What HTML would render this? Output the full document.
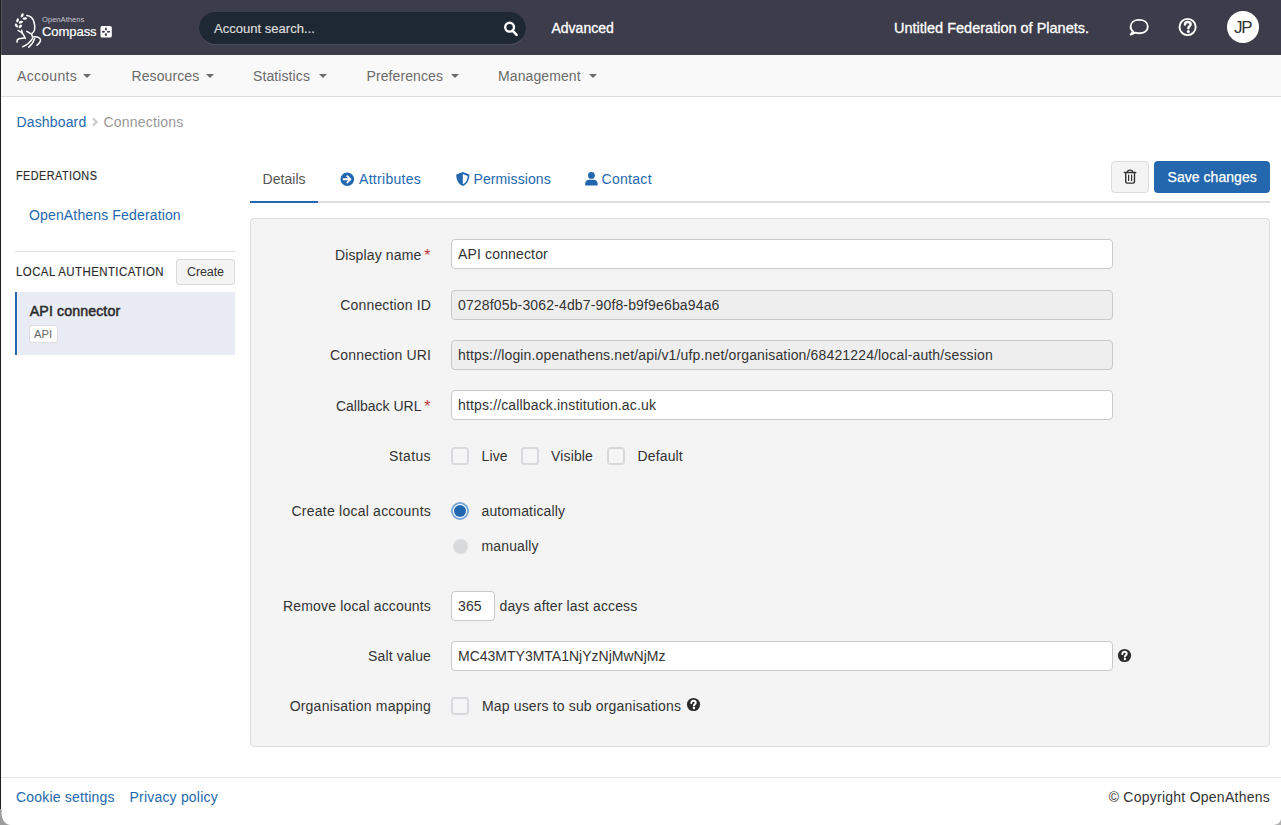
<!DOCTYPE html>
<html><head><meta charset="utf-8">
<style>
html,body{margin:0;padding:0;}
body{width:1281px;height:825px;position:relative;overflow:hidden;background:#fff;font-family:"Liberation Sans",sans-serif;color:#333;}
.a{position:absolute;}
.t{position:absolute;white-space:nowrap;line-height:20px;font-size:14px;}
.r{text-align:right;}
.hdr{left:0;top:0;width:1281px;height:55px;background:#3d3c4b;}
.nav{left:0;top:55px;width:1281px;height:41px;background:#f9f9f9;border-bottom:1px solid #dcdcdc;}
.navt{color:#6b6b6b;top:66px;letter-spacing:0.1px;}
.caret{position:absolute;width:0;height:0;border-left:4px solid transparent;border-right:4px solid transparent;border-top:4px solid #6b6b6b;top:74px;}
.link{color:#2368ae;}
.lbl{color:#333;letter-spacing:0.15px;}
.inp{position:absolute;left:451px;width:660px;height:28px;border:1px solid #c9c9c9;border-radius:4px;background:#fff;}
.dis{background:#eeeeee;}
.cb{position:absolute;width:14px;height:14px;border:2px solid #d8d9dc;border-radius:3.5px;background:#f5f5f5;}
</style></head><body>

<!-- header -->
<div class="a hdr"></div>
<div class="a nav"></div>


<!-- logo -->
<svg class="a" style="left:0;top:0" width="130" height="55" viewBox="0 0 130 55">
 <g fill="none" stroke="#fff" stroke-width="1.5" stroke-linecap="round" stroke-linejoin="round">
  <path d="M26.8,15.6 C30.5,16 33,18.5 34,22 C34.7,24.5 35.2,27 34.6,29.6 C34.2,31.5 33,33 31.4,34 C32,35 32.3,36 32.4,37"/>
  <path d="M26.8,31.4 C28.5,32.5 30,33.3 31.4,34"/>
  <path d="M18.1,30.4 C19.8,31.3 21.2,32 22.2,33 C23.5,34.6 24.5,36.5 25.3,38.5"/>
  <path d="M21.7,30.2 C22,31.2 22.2,32 22.2,33"/>
  <path d="M17.1,42.1 C16.8,40.5 17.5,39.2 19,38.7 C20.8,38.2 22.5,38.3 24.2,38"/>
  <path d="M22.7,46.7 C26.5,45 30.5,42 32.6,38.3"/>
  <path d="M28.8,47.2 C31.5,45 33.5,42 34.6,38.8"/>
  <path d="M33.4,37 C35.5,36.6 38.5,37 40,38.6 C41.3,40.2 40,43 37,45.2"/>
 </g>
 <g fill="#fff">
  <ellipse cx="22.2" cy="15.3" rx="2.2" ry="1.25" transform="rotate(-60 22.2 15.3)"/>
  <ellipse cx="24.8" cy="18.6" rx="2.2" ry="1.25" transform="rotate(-5 24.8 18.6)"/>
  <ellipse cx="17.6" cy="20.3" rx="2.2" ry="1.25" transform="rotate(-75 17.6 20.3)"/>
  <ellipse cx="20.9" cy="22.2" rx="2.2" ry="1.25" transform="rotate(-20 20.9 22.2)"/>
  <ellipse cx="16.4" cy="25.6" rx="2.2" ry="1.25" transform="rotate(55 16.4 25.6)"/>
  <ellipse cx="20.3" cy="26.4" rx="2.2" ry="1.25" transform="rotate(-50 20.3 26.4)"/>
 </g>
 <rect x="100.5" y="26" width="11.3" height="11.5" rx="1.6" fill="#fff"/>
 <g fill="#3d3c4b">
  <ellipse cx="105.9" cy="29" rx="1.05" ry="1.6"/>
  <ellipse cx="105.9" cy="34.5" rx="1.05" ry="1.6"/>
  <ellipse cx="103.4" cy="31.7" rx="1.6" ry="0.95"/>
  <ellipse cx="108.5" cy="31.7" rx="1.6" ry="0.95"/>
 </g>
</svg>
<div class="t" style="left:42px;top:14.5px;font-size:7.6px;line-height:10px;color:#c4c4cc;">OpenAthens</div>
<div class="t" style="left:42px;top:22px;font-size:13px;color:#fff;letter-spacing:-0.05px;-webkit-text-stroke:0.2px #fff;">Compass</div>

<!-- search -->
<div class="a" style="left:199px;top:12px;width:327px;height:32px;border-radius:16px;background:#1e2833;box-shadow:0 0.6px 0 0 #5d5b6d;"></div>
<div class="t" style="left:214px;top:19px;font-size:13px;color:#dcdcdc;letter-spacing:0.03px;-webkit-text-stroke:0.2px #dcdcdc;">Account search...</div>
<svg class="a" style="left:500px;top:19px" width="22" height="20" viewBox="0 0 22 20">
 <circle cx="9.6" cy="8.2" r="4.4" fill="none" stroke="#fff" stroke-width="2.4"/>
 <path d="M12.5,11.6 L16.6,15.8" stroke="#fff" stroke-width="2.6" stroke-linecap="round"/>
</svg>
<div class="t" style="left:551.5px;top:18px;color:#fff;-webkit-text-stroke:0.3px #fff;">Advanced</div>
<div class="t" style="left:894px;top:18px;color:#fff;font-size:14.5px;-webkit-text-stroke:0.3px #fff;">Untitled Federation of Planets.</div>

<!-- chat / help / avatar -->
<svg class="a" style="left:1120px;top:10px" width="90" height="35" viewBox="1120 10 90 35">
 <path d="M1133.2,31.6 C1131.4,30.4 1130.6,28.6 1130.6,26.6 C1130.6,22.4 1134.4,19.9 1139.2,19.9 C1144,19.9 1147.8,22.4 1147.8,26.6 C1147.8,30.8 1144,33.3 1139.2,33.3 C1137.8,33.3 1136.6,33.1 1135.4,32.7 L1130.6,34.6 Z" fill="none" stroke="#fff" stroke-width="1.9" stroke-linejoin="round"/>
 <circle cx="1187.6" cy="27" r="8.1" fill="none" stroke="#fff" stroke-width="1.9"/>
 <path d="M1185,24.4 C1185,22.8 1186.2,21.9 1187.8,21.9 C1189.5,21.9 1190.6,22.9 1190.6,24.3 C1190.6,26.2 1188.4,26.3 1188.4,28.2" fill="none" stroke="#fff" stroke-width="2.5" stroke-linecap="round"/>
 <circle cx="1188.3" cy="31.6" r="1.5" fill="#fff"/>
</svg>
<div class="a" style="left:1226.8px;top:10.5px;width:32.4px;height:32.6px;border-radius:50%;background:#fff;"></div>
<div class="t" style="left:1234px;top:18px;font-size:17px;line-height:20px;color:#333;letter-spacing:-1.2px;">JP</div>


<!-- nav -->
<div class="t navt" style="left:17px;letter-spacing:0.3px;">Accounts</div><div class="caret" style="left:83px;"></div>
<div class="t navt" style="left:131.5px;">Resources</div><div class="caret" style="left:205.5px;"></div>
<div class="t navt" style="left:253px;">Statistics</div><div class="caret" style="left:318.5px;"></div>
<div class="t navt" style="left:366.5px;">Preferences</div><div class="caret" style="left:450.5px;"></div>
<div class="t navt" style="left:498px;">Management</div><div class="caret" style="left:588.5px;"></div>

<!-- breadcrumb -->
<div class="t link" style="left:16.5px;top:112px;letter-spacing:0.15px;">Dashboard</div>
<svg class="a" style="left:90px;top:115px" width="10" height="13" viewBox="0 0 10 13"><path d="M3,3.4 L6.6,7 L3,10.6" fill="none" stroke="#cdcdcd" stroke-width="2.3"/></svg>
<div class="t" style="left:103.5px;top:112px;color:#979797;letter-spacing:0.2px;">Connections</div>

<!-- sidebar -->
<div class="t" style="left:15.7px;top:165.7px;font-size:12.5px;color:#2b2b2b;letter-spacing:0.5px;transform:scaleX(0.87);transform-origin:0 0;-webkit-text-stroke:0.15px #2b2b2b;">FEDERATIONS</div>
<div class="t link" style="left:29px;top:205px;letter-spacing:0.15px;">OpenAthens Federation</div>
<div class="a" style="left:15px;top:251px;width:220px;height:1px;background:#dedede;"></div>
<div class="t" style="left:15.5px;top:261.5px;font-size:12.5px;color:#2b2b2b;letter-spacing:0.5px;transform:scaleX(0.913);transform-origin:0 0;-webkit-text-stroke:0.15px #2b2b2b;">LOCAL AUTHENTICATION</div>
<div class="a" style="left:176px;top:259px;width:57px;height:24px;border:1px solid #dadada;border-radius:3px;background:#f4f4f4;"></div>
<div class="t" style="left:187px;top:261.5px;font-size:12.5px;color:#333;letter-spacing:-0.1px;">Create</div>
<div class="a" style="left:15px;top:292px;width:218px;height:63px;border-left:2px solid #2368ae;background:#e9ecf5;box-shadow:inset 1px 0 0 #f2f4fa;"></div>
<div class="t" style="left:29.8px;top:301px;font-size:14.2px;color:#2b2b2b;letter-spacing:0.1px;-webkit-text-stroke:0.5px #2b2b2b;">API connector</div>
<div class="a" style="left:29px;top:325px;width:26.5px;height:15.5px;border:1px solid #dcdcdc;border-radius:3px;background:#fff;"></div>
<div class="t" style="left:34px;top:326.5px;font-size:11.2px;line-height:14px;color:#666;">API</div>


<!-- tabs -->
<div class="t" style="left:262.5px;top:169px;color:#555;letter-spacing:0.05px;">Details</div>
<div class="a" style="left:250px;top:201px;width:1020px;height:2px;background:#dedede;"></div>
<div class="a" style="left:250px;top:201px;width:68px;height:2px;background:#2368ae;"></div>
<svg class="a" style="left:340px;top:171.7px" width="15" height="15" viewBox="0 0 15 15">
 <circle cx="7.3" cy="7.3" r="6.8" fill="#2368ae"/>
 <path d="M3.6,7.3 L10.2,7.3 M7.3,4.2 L10.4,7.3 L7.3,10.4" fill="none" stroke="#fff" stroke-width="1.9" stroke-linecap="round" stroke-linejoin="round"/>
</svg>
<div class="t link" style="left:359px;top:169px;letter-spacing:0.3px;">Attributes</div>
<svg class="a" style="left:455px;top:171px" width="15" height="16" viewBox="0 0 15 16">
 <path d="M7.8,0.9 L14.3,3.5 C14.5,9 12.2,13 7.8,15.1 C3.4,13 1.1,9 1.3,3.5 Z" fill="#2368ae"/>
 <path d="M7.8,2.9 L12.6,4.9 C12.6,8.8 11,11.8 7.8,13.3 Z" fill="#fff"/>
</svg>
<div class="t link" style="left:473.5px;top:169px;letter-spacing:0.1px;">Permissions</div>
<svg class="a" style="left:584px;top:171px" width="15" height="16" viewBox="0 0 15 16">
 <circle cx="7.4" cy="4.4" r="3.4" fill="#2368ae"/>
 <path d="M1.2,14.6 L1.2,12.6 C1.2,10.2 3,8.8 5,8.8 L9.8,8.8 C11.8,8.8 13.6,10.2 13.6,12.6 L13.6,14.6 Z" fill="#2368ae"/>
</svg>
<div class="t link" style="left:601.5px;top:169px;letter-spacing:0.3px;">Contact</div>

<div class="a" style="left:1111px;top:161px;width:36px;height:30px;border:1px solid #dcdcdc;border-radius:4px;background:#f4f4f4;"></div>
<svg class="a" style="left:1115px;top:163px" width="30" height="28" viewBox="0 0 30 28">
 <path d="M9.4,9.5 L20.7,9.5" stroke="#333" stroke-width="1.5" stroke-linecap="round"/>
 <path d="M12.4,9.2 C12.4,7.6 13.1,7.1 15.05,7.1 C17,7.1 17.7,7.6 17.7,9.2" fill="none" stroke="#333" stroke-width="1.3"/>
 <path d="M10.7,10 L10.7,18.6 C10.7,19.6 11.3,20.1 12.3,20.1 L17.9,20.1 C18.9,20.1 19.5,19.6 19.5,18.6 L19.5,10" fill="none" stroke="#333" stroke-width="1.4"/>
 <path d="M13.6,12 L13.6,17.4 M16.6,12 L16.6,17.4" stroke="#333" stroke-width="1.2" stroke-linecap="round"/>
</svg>
<div class="a" style="left:1154px;top:161px;width:116px;height:32px;border-radius:4px;background:#2368ae;"></div>
<div class="t" style="left:1167.5px;top:167px;color:#fff;-webkit-text-stroke:0.25px #fff;letter-spacing:0.05px;">Save changes</div>

<!-- panel -->
<div class="a" style="left:250px;top:218px;width:1018px;height:527px;border:1px solid #dedede;border-radius:4px;background:#f4f4f4;"></div>

<!-- form -->
<div class="t lbl r" style="left:250px;width:171.5px;top:245px;">Display name</div>
<div class="t" style="left:424.3px;top:246px;color:#c0393b;font-size:16px;">*</div>
<div class="inp" style="top:239px;"></div>
<div class="t lbl" style="left:458px;top:244px;">API connector</div>
<div class="t lbl r" style="left:250px;width:181px;top:295px;">Connection ID</div>
<div class="inp dis" style="top:290px;"></div>
<div class="t lbl" style="left:458px;top:295px;">0728f05b-3062-4db7-90f8-b9f9e6ba94a6</div>
<div class="t lbl r" style="left:250px;width:181px;top:345px;">Connection URI</div>
<div class="inp dis" style="top:340px;"></div>
<div class="t lbl" style="left:458px;top:345px;">https://login.openathens.net/api/v1/ufp.net/organisation/68421224/local-auth/session</div>
<div class="t lbl r" style="left:250px;width:171.5px;top:396px;letter-spacing:0;">Callback URL</div>
<div class="t" style="left:424.3px;top:397px;color:#c0393b;font-size:16px;">*</div>
<div class="inp" style="top:390px;"></div>
<div class="t lbl" style="left:458px;top:395px;">https://callback.institution.ac.uk</div>
<div class="t lbl r" style="left:250px;width:181px;top:446px;letter-spacing:0.37px;">Status</div>
<div class="cb" style="left:451px;top:447px;"></div>
<div class="t lbl" style="left:481.5px;top:446px;">Live</div>
<div class="cb" style="left:521px;top:447px;"></div>
<div class="t lbl" style="left:551px;top:446px;">Visible</div>
<div class="cb" style="left:607px;top:447px;"></div>
<div class="t lbl" style="left:637.5px;top:446px;">Default</div>
<div class="t lbl r" style="left:250px;width:181px;top:501px;letter-spacing:0.23px;">Create local accounts</div>
<div class="a" style="left:451px;top:502px;width:14px;height:14px;border-radius:50%;border:2px solid #79a9d9;background:#fff;"></div>
<div class="a" style="left:454px;top:505px;width:12px;height:12px;border-radius:50%;background:#2368ae;"></div>
<div class="t lbl" style="left:481.5px;top:501px;">automatically</div>
<div class="a" style="left:452.5px;top:538.6px;width:15px;height:15px;border-radius:50%;background:#d9dadc;"></div>
<div class="t lbl" style="left:481.5px;top:536px;">manually</div>
<div class="t lbl r" style="left:250px;width:181px;top:596px;">Remove local accounts</div>
<div class="inp" style="top:591px;width:42px;"></div>
<div class="t lbl" style="left:458px;top:596px;">365</div>
<div class="t lbl" style="left:499.5px;top:596px;">days after last access</div>
<div class="t lbl r" style="left:250px;width:181px;top:646px;">Salt value</div>
<div class="inp" style="top:641px;"></div>
<div class="t lbl" style="left:458px;top:646px;letter-spacing:0;">MC43MTY3MTA1NjYzNjMwNjMz</div>
<svg class="a" style="left:1116.5px;top:648px" width="15" height="15" viewBox="0 0 15 15">
 <circle cx="7.5" cy="7.5" r="6.6" fill="#2c2c2c"/>
 <path d="M5.3,5.9 C5.3,4.6 6.2,3.8 7.5,3.8 C8.8,3.8 9.7,4.6 9.7,5.7 C9.7,7.1 7.9,7.2 7.9,8.6" fill="none" stroke="#fff" stroke-width="2" stroke-linecap="round"/>
 <circle cx="7.9" cy="11" r="1.2" fill="#fff"/>
</svg>
<div class="t lbl r" style="left:250px;width:181px;top:696px;letter-spacing:0.22px;">Organisation mapping</div>
<div class="cb" style="left:451px;top:696.5px;"></div>
<div class="t lbl" style="left:482px;top:696px;">Map users to sub organisations</div>
<svg class="a" style="left:686px;top:697px" width="15" height="15" viewBox="0 0 15 15">
 <circle cx="7.5" cy="7.5" r="6.6" fill="#2c2c2c"/>
 <path d="M5.3,5.9 C5.3,4.6 6.2,3.8 7.5,3.8 C8.8,3.8 9.7,4.6 9.7,5.7 C9.7,7.1 7.9,7.2 7.9,8.6" fill="none" stroke="#fff" stroke-width="2" stroke-linecap="round"/>
 <circle cx="7.9" cy="11" r="1.2" fill="#fff"/>
</svg>

<!-- footer -->
<div class="a" style="left:0;top:777px;width:1281px;height:1px;background:#e6e6e6;"></div>
<div class="t link" style="left:16px;top:787px;letter-spacing:0.2px;">Cookie settings</div>
<div class="t link" style="left:129.5px;top:787px;letter-spacing:0.2px;">Privacy policy</div>
<div class="t r" style="left:1000px;width:1270px;left:0;top:787px;color:#333;letter-spacing:0.25px;">&copy; Copyright OpenAthens</div>

<!-- left window border -->
<div class="a" style="left:0;top:0;width:1px;height:809px;background:#1e1e1e;"></div>
<svg class="a" style="left:0;top:800px" width="1281" height="25" viewBox="0 800 1281 25">
 <path d="M0,809 L1.6,809 L1.6,813 C1.8,820 5,824.5 11,825 L0,825 Z" fill="#9c9c9c"/>
 <path d="M1281,819 C1280,823.5 1277,825 1271,825 L1281,825 Z" fill="#b0b0b0"/>
</svg>
<div class="a" style="left:1px;top:0;width:1px;height:55px;background:#545464;"></div>

</body></html>
